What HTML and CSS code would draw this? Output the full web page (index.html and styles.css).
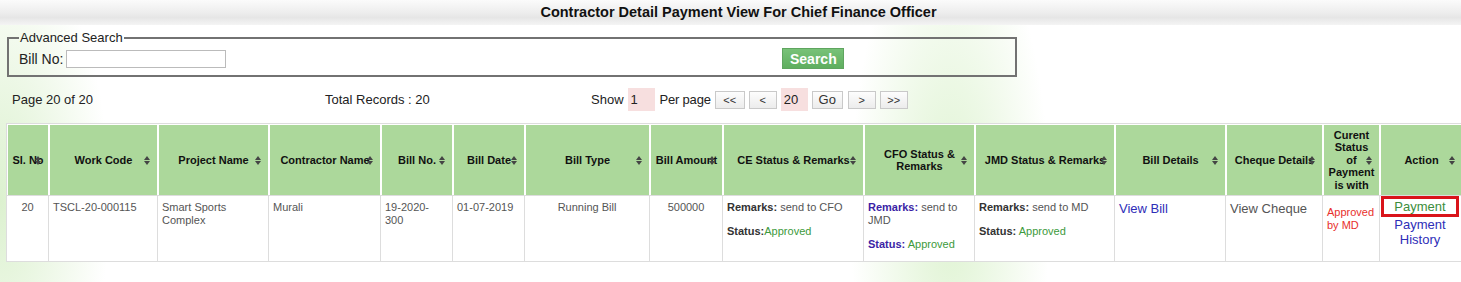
FILE: index.html
```html
<!DOCTYPE html>
<html lang="en">
	<head>
		<meta charset="utf-8">
		<meta name="format-detection" content="telephone=no">
		<title>Contractor Detail Payment View</title>
		<link rel="stylesheet" href="styles.css">
	</head>
	<body>
		<div class="titleBar">Contractor Detail Payment View For Chief Finance Officer</div>

		<fieldset class="searchBox">
			<legend>Advanced Search</legend>
			<div class="searchRow">
				<label for="billNo">Bill No:</label>
				<input type="text" id="billNo" class="billInput">
				<input type="button" class="searchBtn" value="Search">
			</div>
		</fieldset>

		<div class="pagerRow">
			<div class="pageInfo">Page 20 of 20</div>
			<div class="totalInfo">Total Records : 20</div>
			<div class="pager">
				<span>Show</span>
				<input type="text" class="pinkInput" value="1">
				<span class="perPage">Per page</span>
				<input type="button" class="pageBtn wide" value="&lt;&lt;">
				<input type="button" class="pageBtn" value="&lt;">
				<input type="text" class="pinkInput" value="20">
				<input type="button" class="pageBtn goBtn" value="Go">
				<input type="button" class="pageBtn" value="&gt;">
				<input type="button" class="pageBtn" value="&gt;&gt;">
			</div>
		</div>

		<div class="gridWrap">
			<table class="grid">
				<colgroup>
					<col style="width:42px">
					<col style="width:109px">
					<col style="width:111px">
					<col style="width:112px">
					<col style="width:72px">
					<col style="width:72px">
					<col style="width:125px">
					<col style="width:73px">
					<col style="width:141px">
					<col style="width:111px">
					<col style="width:140px">
					<col style="width:111px">
					<col style="width:97px">
					<col style="width:57px">
					<col style="width:82px">
				</colgroup>
				<thead>
					<tr>
						<th class="sort">Sl. No</th>
						<th class="sort">Work Code</th>
						<th class="sort">Project Name</th>
						<th class="sort">Contractor Name</th>
						<th class="sort">Bill No.</th>
						<th class="sort">Bill Date</th>
						<th class="sort">Bill Type</th>
						<th class="sort">Bill Amount</th>
						<th class="sort">CE Status &amp; Remarks</th>
						<th class="sort">CFO Status &amp; Remarks</th>
						<th class="sort">JMD Status &amp; Remarks</th>
						<th class="sort">Bill Details</th>
						<th class="sort">Cheque Details</th>
						<th class="sort">Curent Status of Payment is with</th>
						<th class="sort">Action</th>
					</tr>
				</thead>
				<tbody>
					<tr>
						<td class="center">20</td>
						<td>TSCL-20-000115</td>
						<td>Smart Sports Complex</td>
						<td>Murali</td>
						<td><span class="plain">19-2020-<br>300</span></td>
						<td><span class="plain">01-07-2019</span></td>
						<td class="center">Running Bill</td>
						<td class="center">500000</td>
						<td>
							<div class="remark"><b>Remarks:</b> send to CFO</div>
							<div><b>Status:</b><span class="approved">Approved</span></div>
						</td>
						<td>
							<div class="remark"><b class="cfoLabel">Remarks:</b> send to<br>JMD</div>
							<div><b class="cfoLabel">Status:</b> <span class="approved">Approved</span></div>
						</td>
						<td>
							<div class="remark"><b>Remarks:</b> send to MD</div>
							<div><b>Status:</b> <span class="approved">Approved</span></div>
						</td>
						<td class="big"><a href="#" class="blueLink">View Bill</a></td>
						<td class="big">View Cheque</td>
						<td><div class="withMd">Approved by MD</div></td>
						<td class="action">
							<a href="#" class="payLink">Payment</a>
							<a href="#" class="blueLink">Payment History</a>
						</td>
					</tr>
				</tbody>
			</table>
		</div>
	</body>
</html>
```

FILE: styles.css
```css
body {
	margin: 0;
	font-family: "Liberation Sans", Arial, sans-serif;
	color: #222;
	min-height: 282px;
	background:
		radial-gradient(ellipse 110px 260px at 0 200px, #dcf1cf, rgba(255,255,255,0)),
		radial-gradient(ellipse 100px 300px at 950px 210px, #def3d1, rgba(255,255,255,0)),
		#fff;
	overflow: hidden;
}

.titleBar {
	height: 25px;
	line-height: 25px;
	padding-left: 16px;
	text-align: center;
	font-size: 14.5px;
	font-weight: bold;
	color: #111;
	background: linear-gradient(#fbfbfb, #ececec 55%, #e6e6e6 70%, #f4f4f4);
}

.searchBox {
	box-sizing: border-box;
	width: 1010px;
	margin: 5px 0 0 7px;
	padding: 3px 10px 6px 10px;
	border: 2px solid #727272;
}

.searchBox legend {
	font-size: 13px;
	padding: 0 1px;
	color: #222;
}

.searchRow {
	display: flex;
	align-items: center;
	height: 21px;
	font-size: 14px;
}

.billInput {
	box-sizing: border-box;
	width: 160px;
	height: 18px;
	margin-left: 3px;
	border: 1px solid #bbb;
	padding: 0 3px;
}

.searchBtn {
	box-sizing: border-box;
	width: 62px;
	height: 21px;
	margin-left: 556px;
	border: 1px solid #5fa55f;
	background: linear-gradient(#78c278, #5fae5f);
	color: #fff;
	font-family: "Liberation Sans", Arial, sans-serif;
	font-size: 14px;
	font-weight: bold;
	padding: 0;
}

.pagerRow {
	display: flex;
	align-items: center;
	height: 23px;
	margin-top: 11px;
	padding-left: 12px;
	font-size: 13px;
	color: #222;
}

.pageInfo {
	width: 313px;
}

.totalInfo {
	width: 266px;
}

.pager {
	display: flex;
	align-items: center;
	gap: 4px;
}

.pinkInput {
	box-sizing: border-box;
	width: 27px;
	height: 23px;
	border: none;
	background: #f7dfdf;
	font-family: "Liberation Sans", Arial, sans-serif;
	font-size: 13px;
	padding: 0 3px;
	color: #222;
}

.perPage {
	margin-left: 1px;
	letter-spacing: -0.2px;
}

.pageBtn {
	box-sizing: border-box;
	width: 28px;
	height: 18px;
	padding: 0;
	border: 1px solid #c9c9c9;
	background: linear-gradient(#fdfdfd, #ececec);
	font-family: "Liberation Sans", Arial, sans-serif;
	font-size: 11px;
	color: #333;
}

.pageBtn.wide {
	width: 30px;
}

.goBtn {
	width: 31px;
	font-size: 13px;
	margin-right: 1px;
}

.gridWrap {
	margin: 12px 0 0 6px;
	overflow: hidden;
}

.grid {
	table-layout: fixed;
	width: 1455px;
	border-collapse: separate;
	border-spacing: 0;
	border: 1px solid #ddd;
	background: #fff;
}

.grid th {
	position: relative;
	height: 70px;
	padding: 0 4px;
	background: #acd89b;
	border-left: 1px solid #fff;
	border-right: 1px solid #fff;
	border-top: 1px solid #fff;
	font-size: 11px;
	line-height: 12.5px;
	color: #111;
	text-align: center;
	vertical-align: middle;
}

.grid th.sort::before,
.grid th.sort::after {
	content: "";
	position: absolute;
	right: 7px;
	border-left: 3px solid transparent;
	border-right: 3px solid transparent;
}

.grid th.sort::before {
	top: 31px;
	border-bottom: 4px solid #444;
}

.grid th.sort::after {
	top: 36px;
	border-top: 4px solid #444;
}

.grid td {
	height: 55px;
	padding: 5px 4px;
	border-right: 1px solid #ddd;
	border-top: 1px solid #ddd;
	font-size: 11px;
	line-height: 13px;
	color: #555;
	vertical-align: top;
	word-wrap: break-word;
}

.grid td:last-child,
.grid th:last-child {
	border-right: none;
}

.plain {
	color: #555;
}

.center {
	text-align: center;
}

.big {
	font-size: 13px !important;
	line-height: 15px !important;
}

.remark {
	margin-bottom: 11px;
}

.grid b {
	color: #333;
}

.grid b.cfoLabel {
	color: #3c1fa6;
}

.approved {
	color: #3c9a3c;
}

.blueLink {
	color: #2e2eb8;
	text-decoration: none;
}

.withMd {
	margin-top: 5px;
	color: #e8302c;
	line-height: 12.5px;
}

.grid td.action {
	padding: 0 3px 0 1px;
	text-align: center;
	font-size: 13px;
	line-height: 15px;
}

.payLink {
	display: block;
	border: 3px solid #d9141a;
	color: #3c8d3c;
	text-decoration: none;
}

.action .blueLink {
	display: block;
	padding: 0 6px;
}
```
